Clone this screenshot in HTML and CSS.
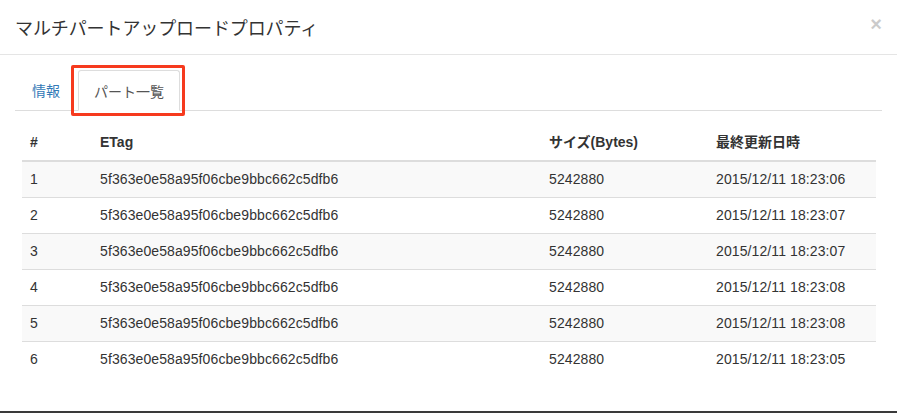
FILE: index.html
```html
<!DOCTYPE html>
<html lang="ja">
<head>
<meta charset="utf-8">
<title>マルチパートアップロードプロパティ</title>
<link rel="stylesheet" href="styles.css">
</head>
<body>
<div class="modal">
  <div class="modal-header">
    <h4 class="modal-title">マルチパートアップロードプロパティ</h4>
    <button class="close" type="button">×</button>
  </div>
  <div class="modal-body">
    <ul class="nav-tabs">
      <li class="tab"><a class="tab-link">情報</a></li>
      <li class="tab active"><a class="tab-link">パート一覧</a><span class="highlight"></span></li>
    </ul>
    <div class="tab-pane">
      <table class="table">
        <colgroup>
          <col class="c-num"><col class="c-etag"><col class="c-size"><col class="c-date">
        </colgroup>
        <thead>
          <tr><th>#</th><th>ETag</th><th>サイズ(Bytes)</th><th>最終更新日時</th></tr>
        </thead>
        <tbody>
          <tr><td>1</td><td>5f363e0e58a95f06cbe9bbc662c5dfb6</td><td>5242880</td><td>2015/12/11 18:23:06</td></tr>
          <tr><td>2</td><td>5f363e0e58a95f06cbe9bbc662c5dfb6</td><td>5242880</td><td>2015/12/11 18:23:07</td></tr>
          <tr><td>3</td><td>5f363e0e58a95f06cbe9bbc662c5dfb6</td><td>5242880</td><td>2015/12/11 18:23:07</td></tr>
          <tr><td>4</td><td>5f363e0e58a95f06cbe9bbc662c5dfb6</td><td>5242880</td><td>2015/12/11 18:23:08</td></tr>
          <tr><td>5</td><td>5f363e0e58a95f06cbe9bbc662c5dfb6</td><td>5242880</td><td>2015/12/11 18:23:08</td></tr>
          <tr><td>6</td><td>5f363e0e58a95f06cbe9bbc662c5dfb6</td><td>5242880</td><td>2015/12/11 18:23:05</td></tr>
        </tbody>
      </table>
    </div>
  </div>
</div>
</body>
</html>
```
FILE: styles.css
```css
* { box-sizing: border-box; }
html, body {
  margin: 0;
  padding: 0;
  background: #fff;
}
body {
  font-family: "Liberation Sans", Arial, "Noto Sans CJK JP", sans-serif;
  font-size: 14px;
  color: #333;
}
.modal {
  height: 413px;
  border-bottom: 2px solid #3a3a3a;
  overflow: hidden;
}
.modal-header {
  display: flex;
  align-items: flex-start;
  justify-content: space-between;
  padding: 15px 15px 15px 15px;
  border-bottom: 1px solid #e5e5e5;
  height: 55px;
}
.modal-title {
  margin: 0;
  font-family: "Noto Sans CJK JP", sans-serif;
  font-weight: normal;
  font-size: 18px;
  line-height: 24px;
  color: #333;
  letter-spacing: -0.1px;
}
.close {
  border: 0;
  background: transparent;
  padding: 0;
  margin-top: 1px;
  font-family: "Liberation Sans", Arial, sans-serif;
  font-size: 20px;
  font-weight: bold;
  line-height: 16px;
  color: #000;
  opacity: 0.2;
}
.modal-body {
  padding: 15px 15px 0 15px;
}
.nav-tabs {
  list-style: none;
  margin: 0;
  padding: 0;
  display: flex;
  border-bottom: 1px solid #ddd;
  height: 41px;
}
.tab {
  position: relative;
  margin-right: 3px;
  margin-bottom: -1px;
}
.tab-link {
  display: block;
  padding: 10px 15px;
  line-height: 20px;
  font-family: "Noto Sans CJK JP", sans-serif;
  font-size: 14px;
  color: #337ab7;
  border: 1px solid transparent;
  border-radius: 3px 3px 0 0;
  height: 41px;
}
.tab:first-child .tab-link {
  padding: 10px 15px 10px 17px;
  border: 0;
}
.tab.active .tab-link {
  color: #555;
  background: #fff;
  border-color: #ddd #ddd transparent #ddd;
  width: 102px;
  padding-left: 15px;
  padding-right: 15px;
}
.highlight {
  position: absolute;
  left: -7px;
  top: -5px;
  right: -5px;
  bottom: -5px;
  border: 3px solid #f63a1e;
  border-radius: 2px;
  pointer-events: none;
}
.tab-pane {
  padding: 14px 6px 0 7px;
}
.table {
  width: 100%;
  border-collapse: collapse;
  table-layout: fixed;
}
.c-num { width: 70px; }
.c-etag { width: 449px; }
.c-size { width: 167px; }
.c-date { width: 168px; }
.table th,
.table td {
  padding: 8px 8px;
  line-height: 19px;
  text-align: left;
  vertical-align: top;
  white-space: nowrap;
}
.table td {
  letter-spacing: 0.1px;
}
.table th {
  font-weight: bold;
  border-bottom: 2px solid #ddd;
}
.table tbody tr + tr td {
  border-top: 1px solid #ddd;
}
.table tbody tr:nth-child(odd) td {
  background: #f9f9f9;
}
```
